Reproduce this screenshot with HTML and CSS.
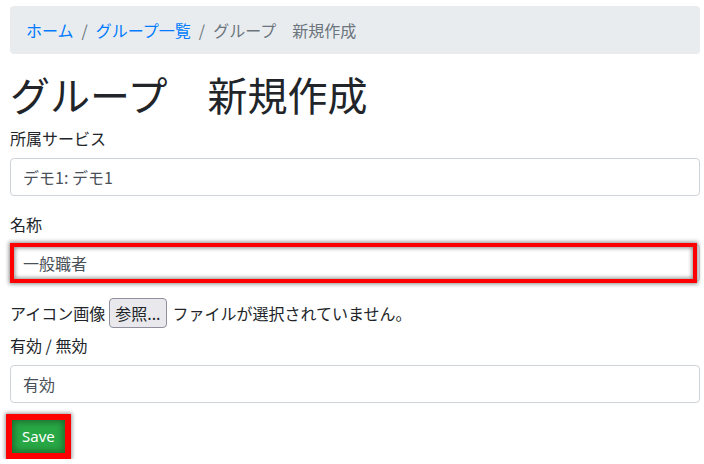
FILE: index.html
```html
<!DOCTYPE html>
<html lang="ja">
<head>
<meta charset="utf-8">
<title>グループ 新規作成</title>
<link rel="stylesheet" href="styles.css">
</head>
<body>
<div class="page">
  <nav>
    <ol class="breadcrumb">
      <li class="crumb"><a href="#">ホーム</a></li>
      <li class="crumb"><a href="#">グループ一覧</a></li>
      <li class="crumb active">グループ　新規作成</li>
    </ol>
  </nav>
  <h1 class="title">グループ　新規作成</h1>
  <form class="form">
    <div class="group">
      <label class="label">所属サービス</label>
      <div class="control">デモ1: デモ1</div>
    </div>
    <div class="group">
      <label class="label">名称</label>
      <div class="highlight-wrap">
        <div class="control">一般職者</div>
        <span class="highlight"></span>
      </div>
    </div>
    <div class="file-row">
      <span>アイコン画像</span>
      <span class="file-btn">参照...</span>
      <span>ファイルが選択されていません。</span>
    </div>
    <div class="group last">
      <label class="label">有効 / 無効</label>
      <div class="control">有効</div>
    </div>
    <button type="button" class="save">Save</button>
  </form>
</div>
</body>
</html>
```
FILE: styles.css
```css
* { box-sizing: border-box; }
html, body { margin: 0; padding: 0; background: #fff; }
body {
  font-family: "Noto Sans CJK JP", "Noto Sans", sans-serif;
  font-size: 16px;
  line-height: 24px;
  color: #212529;
}
.page { padding: 6px 4px 0 10px; }
.breadcrumb {
  display: flex;
  list-style: none;
  margin: 0 0 16px;
  padding: 12px 16px;
  background: #e9ecef;
  border-radius: 4px;
}
.crumb a { color: #007bff; text-decoration: none; }
.crumb + .crumb { padding-left: 8px; }
.crumb + .crumb::before { content: "/"; color: #6c757d; padding-right: 8px; }
.crumb.active { color: #6c757d; }
.title {
  margin: 0 0 8px;
  font-size: 40px;
  line-height: 48px;
  font-weight: 400;
}
.group { margin-bottom: 16px; }
.group.last { margin-bottom: 11px; }
.label { display: block; margin-bottom: 8px; }
.control {
  height: 38px;
  padding: 6px 12px;
  border: 1px solid #ced4da;
  border-radius: 4px;
  color: #495057;
  background: #fff;
}
.highlight-wrap { position: relative; }
.highlight {
  position: absolute;
  left: 0; top: -1px; right: 3px; bottom: -1px;
  border: 4px solid #ff0000;
  box-shadow: 0 0 4px 1px rgba(0,0,0,.45), inset 0 0 4px 1px rgba(0,0,0,.45);
}
.file-row {
  display: flex;
  align-items: center;
  gap: 4px;
  height: 30px;
  margin-bottom: 5px;
}
.file-btn {
  padding: 2px 5px;
  line-height: 24px;
  background: #e9e9ed;
  border: 1px solid #8f8f9d;
  border-radius: 4px;
  margin-right: 2px;
}
.save {
  display: block;
  margin-left: -4px;
  padding: 6px 10px;
  font-family: "Noto Sans", sans-serif;
  font-size: 15px;
  line-height: 21px;
  color: #fff;
  background: #28a745;
  border: 6px solid #ff0000;
  box-shadow: 0 0 4px 1px rgba(0,0,0,.4), inset 0 0 6px 2px rgba(0,0,0,.35);
}
```
